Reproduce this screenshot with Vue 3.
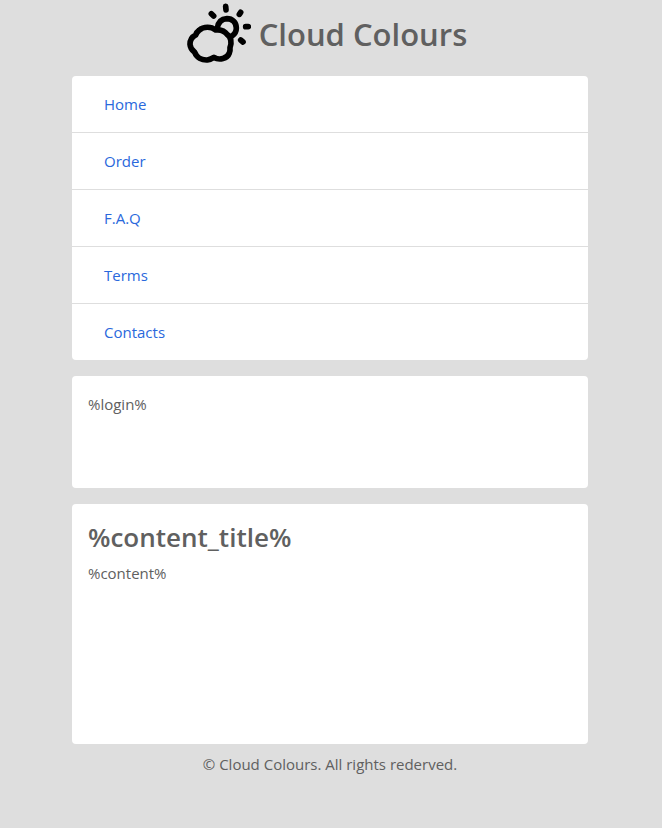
<script setup>
const links = ['Home', 'Order', 'F.A.Q', 'Terms', 'Contacts']
</script>

<template>
  <div class="container">
    <header class="brand">
      <svg class="logo" viewBox="21 6 192 192" aria-hidden="true">
        <g fill="none" stroke="#000" stroke-width="17" stroke-linecap="round" stroke-linejoin="round">
          <path d="M107 90C94 80 72 78 57 91Q50 96 47 105C35 111 30 121 30 133Q31 147 44 157C50 173 66 181 82 180Q94 178 102 172C118 182 142 176 148 159Q151 152 150 143C156 128 153 111 142 104C134 93 120 88 107 90Z" />
          <path d="M112 85C114 67 125 57 141 56C157 56 169 68 169 84Q169 99 156 108" />
          <path d="M137 19L138 30M182 37L178 43M94 41L101 48M197 80H205M182 120L189 126" />
        </g>
      </svg>
      <h1>Cloud Colours</h1>
    </header>
    <nav class="card menu">
      <a v-for="link in links" :key="link" href="#">{{ link }}</a>
    </nav>
    <section class="card login">%login%</section>
    <main class="card content">
      <h2>%content_title%</h2>
      <p>%content%</p>
    </main>
    <footer>© Cloud Colours. All rights rederved.</footer>
  </div>
</template>

<style>
body {
  margin: 0;
  background: #dedede;
}
</style>

<style scoped>
.container {
  box-sizing: border-box;
  max-width: 540px;
  margin: 0 auto;
  padding: 0 13px 0 11px;
  color: #606060;
  font: 15px/24px "Segoe UI", "Open Sans", "Noto Sans", sans-serif;
}
.brand {
  display: flex;
  align-items: center;
  justify-content: center;
  gap: 8px;
  height: 68px;
  margin-bottom: 8px;
  padding-right: 6px;
}
.logo {
  width: 64px;
  height: 64px;
}
h1,
h2,
p {
  margin: 0;
}
h1 {
  font-size: 31px;
  font-weight: 600;
  line-height: 40px;
}
.card {
  box-sizing: border-box;
  margin-bottom: 16px;
  border-radius: 4px;
  background: #fff;
}
.menu a {
  display: block;
  padding: 16px 32px;
  color: #2a68dc;
  text-decoration: none;
}
.menu a + a {
  border-top: 1px solid #dedede;
}
.login {
  min-height: 112px;
  padding: 16px;
}
.content {
  min-height: 240px;
  margin-bottom: 8px;
  padding: 16px;
}
h2 {
  margin-bottom: 7px;
  font-size: 26px;
  font-weight: 600;
  line-height: 34px;
}
footer {
  text-align: center;
}
</style>
